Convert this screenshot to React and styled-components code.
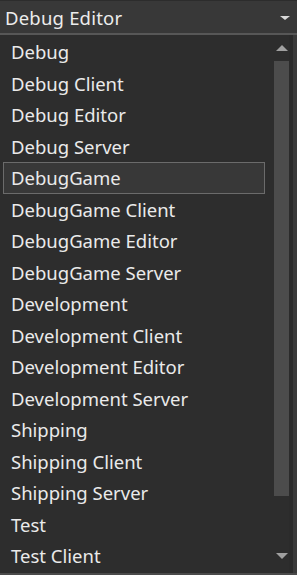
import React from "react";
import styled, { createGlobalStyle } from "styled-components";

const GlobalStyle = createGlobalStyle`
	html, body {
		margin: 0;
		padding: 0;
		background: #2b2b2b;
	}
`;

const items = [
	"Debug",
	"Debug Client",
	"Debug Editor",
	"Debug Server",
	"DebugGame",
	"DebugGame Client",
	"DebugGame Editor",
	"DebugGame Server",
	"Development",
	"Development Client",
	"Development Editor",
	"Development Server",
	"Shipping",
	"Shipping Client",
	"Shipping Server",
	"Test",
	"Test Client",
];

const App = () => {
	return (
		<Page>
			<GlobalStyle />
			<Combo>
				<ComboText>Debug Editor</ComboText>
				<ComboArrow />
			</Combo>
			<Dropdown>
				<List>
					{items.map((name) => (
						<Item key={name} selected={name === "DebugGame"}>
							{name}
						</Item>
					))}
				</List>
				<ScrollBar>
					<ArrowUp />
					<Thumb />
					<ArrowDown />
				</ScrollBar>
				<EdgeStrip />
			</Dropdown>
		</Page>
	);
};

export default App;

const Page = styled.div`
	width: 297px;
	height: 575px;
	display: flex;
	flex-direction: column;
	overflow: hidden;
	font-family: "Noto Sans", "Noto Sans CJK SC", sans-serif;
`;

const Combo = styled.div`
	height: 35px;
	display: flex;
	align-items: center;
	justify-content: space-between;
	padding: 0 7px 0 5px;
	background: #383838;
	border-top: 1px solid #2c2c2c;
	border-bottom: 2px solid #575757;
	box-sizing: border-box;
`;

const ComboText = styled.span`
	color: #ececec;
	font-size: 18.5px;
	letter-spacing: 0.2px;
`;

const ComboArrow = styled.span`
	width: 0;
	height: 0;
	border-left: 5px solid transparent;
	border-right: 5px solid transparent;
	border-top: 4px solid #d8d8d8;
	margin-top: 2px;
`;

const Dropdown = styled.div`
	flex: 1;
	display: flex;
	background: #2d2d2d;
	border-bottom: 2px solid #4a4a4a;
	min-height: 0;
`;

const List = styled.div`
	flex: 1;
	display: flex;
	flex-direction: column;
	padding: 1px 9px 0 3px;
	overflow: hidden;
`;

const Item = styled.div`
	height: 31.5px;
	flex-shrink: 0;
	display: flex;
	align-items: center;
	padding-left: 7px;
	box-sizing: border-box;
	color: #eaeaea;
	font-size: 18.5px;
	white-space: nowrap;
	border: 1px solid ${(p) => (p.selected ? "#6b6b6b" : "transparent")};
	background: ${(p) => (p.selected ? "#383838" : "transparent")};
`;

const ScrollBar = styled.div`
	width: 15px;
	display: flex;
	flex-direction: column;
	align-items: center;
	padding: 10px 0 10px;
	box-sizing: border-box;
`;

const ArrowUp = styled.span`
	width: 0;
	height: 0;
	border-left: 6px solid transparent;
	border-right: 6px solid transparent;
	border-bottom: 6px solid #a0a0a0;
	margin-bottom: 10px;
`;

const Thumb = styled.div`
	width: 15px;
	height: 435px;
	background: #4c4c4c;
`;

const ArrowDown = styled.span`
	width: 0;
	height: 0;
	border-left: 6px solid transparent;
	border-right: 6px solid transparent;
	border-top: 6px solid #a0a0a0;
	margin-top: auto;
	margin-bottom: 4px;
`;

const EdgeStrip = styled.div`
	width: 8px;
	border-left: 4px solid #2b2b2b;
	background: #3a3a3a;
	box-sizing: border-box;
`;
